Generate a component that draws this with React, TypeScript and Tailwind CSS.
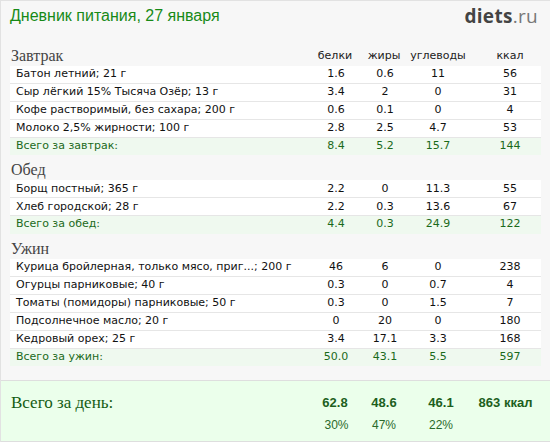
import React from "react";

type Row = { name: string; p: string; f: string; c: string; k: string };

const sections: { title: string; rows: Row[]; total: Row }[] = [
  {
    title: "Завтрак",
    rows: [
      { name: "Батон летний; 21 г", p: "1.6", f: "0.6", c: "11", k: "56" },
      { name: "Сыр лёгкий 15% Тысяча Озёр; 13 г", p: "3.4", f: "2", c: "0", k: "31" },
      { name: "Кофе растворимый, без сахара; 200 г", p: "0.6", f: "0.1", c: "0", k: "4" },
      { name: "Молоко 2,5% жирности; 100 г", p: "2.8", f: "2.5", c: "4.7", k: "53" },
    ],
    total: { name: "Всего за завтрак:", p: "8.4", f: "5.2", c: "15.7", k: "144" },
  },
  {
    title: "Обед",
    rows: [
      { name: "Борщ постный; 365 г", p: "2.2", f: "0", c: "11.3", k: "55" },
      { name: "Хлеб городской; 28 г", p: "2.2", f: "0.3", c: "13.6", k: "67" },
    ],
    total: { name: "Всего за обед:", p: "4.4", f: "0.3", c: "24.9", k: "122" },
  },
  {
    title: "Ужин",
    rows: [
      { name: "Курица бройлерная, только мясо, приг...; 200 г", p: "46", f: "6", c: "0", k: "238" },
      { name: "Огурцы парниковые; 40 г", p: "0.3", f: "0", c: "0.7", k: "4" },
      { name: "Томаты (помидоры) парниковые; 50 г", p: "0.3", f: "0", c: "1.5", k: "7" },
      { name: "Подсолнечное масло; 20 г", p: "0", f: "20", c: "0", k: "180" },
      { name: "Кедровый орех; 25 г", p: "3.4", f: "17.1", c: "3.3", k: "168" },
    ],
    total: { name: "Всего за ужин:", p: "50.0", f: "43.1", c: "5.5", k: "597" },
  },
];

const grid = "grid grid-cols-[300px_50px_48px_60px_69px]";
const arial = { fontFamily: '"Liberation Sans", Arial, sans-serif' };
const serif = { fontFamily: '"Liberation Serif", Georgia, serif' };

function DataRow({ r, total }: { r: Row; total?: boolean }) {
  return (
    <div
      className={`${grid} h-[17.9px] items-center border-b ${
        total ? "bg-[#eff9ef] text-[#1b6a1b] border-transparent" : "bg-white text-[#111] border-[#e6e6e6]"
      }`}
    >
      <div className="pl-[6px] whitespace-nowrap overflow-hidden">{r.name}</div>
      <div className="text-center pl-[2px]">{r.p}</div>
      <div className="text-center pl-[2px]">{r.f}</div>
      <div className="text-center">{r.c}</div>
      <div className="text-center pl-[15px]">{r.k}</div>
    </div>
  );
}

export default function App() {
  return (
    <div
      className="w-[550px] h-[442px] bg-[#f7f7f7] border-t border-l border-[#e2e2e2] flex flex-col overflow-hidden"
      style={{ fontFamily: '"DejaVu Sans", Verdana, sans-serif' }}
    >
      <div className="h-[40px] shrink-0 flex items-start justify-between pl-[9px] pr-[12px] pt-[4px]">
        <div className="text-[16px] leading-[22px] text-[#178a17]" style={arial}>
          Дневник питания, 27 января
        </div>
        <div
          className="text-[19px] leading-[22px] tracking-[0.3px]"
          style={{ fontFamily: '"Open Sans", Arial, sans-serif' }}
        >
          <span className="font-bold text-[#444]">diets</span>
          <span className="text-[#777]">.ru</span>
        </div>
      </div>

      <div className="px-[9px] text-[11px]">
        {sections.map((s, i) => (
          <div key={s.title}>
            <div className={`${grid} h-[25px] items-end`}>
              <div className="text-[16px] leading-[20px] text-[#444] pl-[1px]" style={serif}>
                {s.title}
              </div>
              {i === 0 ? (
                <>
                  <div className="text-center text-[#222] leading-[16px] pb-[2px]">белки</div>
                  <div className="text-center text-[#222] leading-[16px] pb-[2px]">жиры</div>
                  <div className="text-center text-[#222] leading-[16px] pb-[2px]">углеводы</div>
                  <div className="text-center text-[#222] leading-[16px] pb-[2px] pl-[15px]">ккал</div>
                </>
              ) : null}
            </div>
            {s.rows.map((r) => (
              <DataRow key={r.name} r={r} />
            ))}
            <DataRow r={s.total} total />
          </div>
        ))}
      </div>

      <div className="mt-auto h-[62px] shrink-0 bg-[#ebffeb] border-t border-b border-[#dedede] px-[9px] pt-[12px]">
        <div className={`${grid} items-center`}>
          <div className="text-[17px] leading-[20px] text-[#135c13] pl-[1px]" style={serif}>
            Всего за день:
          </div>
          <div className="text-center font-bold text-[13px] text-[#1d5f1d]" style={arial}>62.8</div>
          <div className="text-center font-bold text-[13px] text-[#1d5f1d]" style={arial}>48.6</div>
          <div className="text-center font-bold text-[13px] text-[#1d5f1d] pl-[6px]" style={arial}>46.1</div>
          <div className="text-center font-bold text-[13px] text-[#1d5f1d] pl-[6px]" style={arial}>863 ккал</div>
        </div>
        <div className={`${grid} items-center mt-[3px]`}>
          <div />
          <div className="text-center text-[12px] text-[#2a6a2a] pl-[3px]" style={arial}>30%</div>
          <div className="text-center text-[12px] text-[#2a6a2a]" style={arial}>47%</div>
          <div className="text-center text-[12px] text-[#2a6a2a] pl-[6px]" style={arial}>22%</div>
          <div />
        </div>
      </div>
    </div>
  );
}
